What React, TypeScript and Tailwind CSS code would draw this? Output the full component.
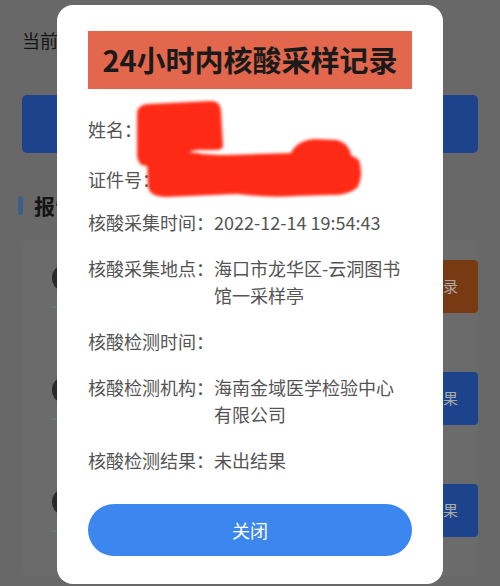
import React from "react";

const rows: { label: string; value: string[] }[] = [
  { label: "核酸采集时间：", value: ["2022-12-14 19:54:43"] },
  { label: "核酸采集地点：", value: ["海口市龙华区-云洞图书", "馆一采样亭"] },
  { label: "核酸检测时间：", value: [] },
  { label: "核酸检测机构：", value: ["海南金域医学检验中心", "有限公司"] },
  { label: "核酸检测结果：", value: ["未出结果"] },
];

const bgRows = [
  { color: "bg-[#773a12]", text: "采样记录" },
  { color: "bg-[#1c438c]", text: "查看结果" },
  { color: "bg-[#1c438c]", text: "查看结果" },
];

export default function App() {
  return (
    <div
      className="relative w-[500px] h-[586px] overflow-hidden bg-[#686868]"
      style={{ fontFamily: '"Noto Sans CJK SC", "Noto Sans", sans-serif' }}
    >
      {/* dimmed page behind */}
      <div className="px-[22px]">
        <div className="pt-[28px] h-[52px] text-[18px] leading-[24px] text-[#141414]">当前用户</div>
        <div className="mt-[43px] h-[58px] rounded-[5px] bg-[#1d438c]" />
        <div className="mt-[40px] flex items-center gap-[11px] -ml-[4px]">
          <div className="w-[5px] h-[19px] rounded-full bg-[#3b5f8a]" />
          <div className="text-[21px] leading-[24px] font-bold text-[#141414]">报告</div>
        </div>
        <div className="mt-[23px] flex flex-col bg-[#6b6b6b] rounded-[4px]">
          {bgRows.map((r, i) => (
            <div key={i} className="h-[112px] flex items-start justify-between pl-[30px]">
              <div className="pt-[24px] flex flex-col gap-[14px]">
                <div className="w-[28px] h-[28px] rounded-full bg-[#2a2a2a]" />
                <div className="w-[40px] h-[2px] bg-[#5f7f74]" />
              </div>
              <div
                className={`mt-[20px] w-[100px] h-[53px] rounded-[4px] ${r.color} flex items-center justify-center text-[15px] text-[#a9a9a9]`}
              >
                {r.text}
              </div>
            </div>
          ))}
        </div>
      </div>

      {/* modal */}
      <div className="absolute left-[57px] top-[5px] w-[386px] h-[579px] rounded-[16px] bg-white px-[31px] pt-[26px] flex flex-col">
        <div className="h-[58px] bg-[#e2674d] flex items-center justify-center text-[29px] font-bold text-[#1a1a1a]">
          24小时内核酸采样记录
        </div>
        <div className="mt-[27px] text-[18px] leading-[27px] text-[#545454]">姓名：</div>
        <div className="mt-[23px] text-[18px] leading-[27px] text-[#545454]">证件号：</div>
        {rows.map((r, i) => (
          <div
            key={i}
            className={`${i === 0 ? "mt-[16px]" : "mt-[19px]"} flex text-[18px] leading-[27px] text-[#545454]`}
          >
            <div className="shrink-0">{r.label}</div>
            <div className="flex flex-col">
              {r.value.map((v, j) => (
                <div key={j}>{v}</div>
              ))}
            </div>
          </div>
        ))}
        <button className="mt-[30px] h-[52px] rounded-full bg-[#3c86ef] text-white text-[18px]">
          关闭
        </button>

        {/* red scribble */}
        <svg
          className="absolute left-[70px] top-[90px]"
          width="250"
          height="115"
          viewBox="130 95 250 115"
        >
          <defs>
            <filter id="bl" x="-20%" y="-20%" width="140%" height="140%">
              <feGaussianBlur stdDeviation="1.6" />
            </filter>
          </defs>
          <g fill="#ff2a14" filter="url(#bl)">
            <path d="M140 112 Q142 104 152 104 L214 101 Q223 101 224 110 L226 146 Q226 150 218 150 L200 150 Q192 151 188 156 L150 166 Q141 166 140 156 Z" />
            <path d="M150 160 Q150 150 160 150 L200 153 Q212 155 232 155 L294 153 Q300 140 318 139 L340 140 Q352 143 354 155 L362 160 Q367 176 360 188 Q350 196 332 195 L300 196 Q270 198 240 194 L170 197 Q152 197 151 186 Z" />
          </g>
        </svg>
      </div>
    </div>
  );
}
